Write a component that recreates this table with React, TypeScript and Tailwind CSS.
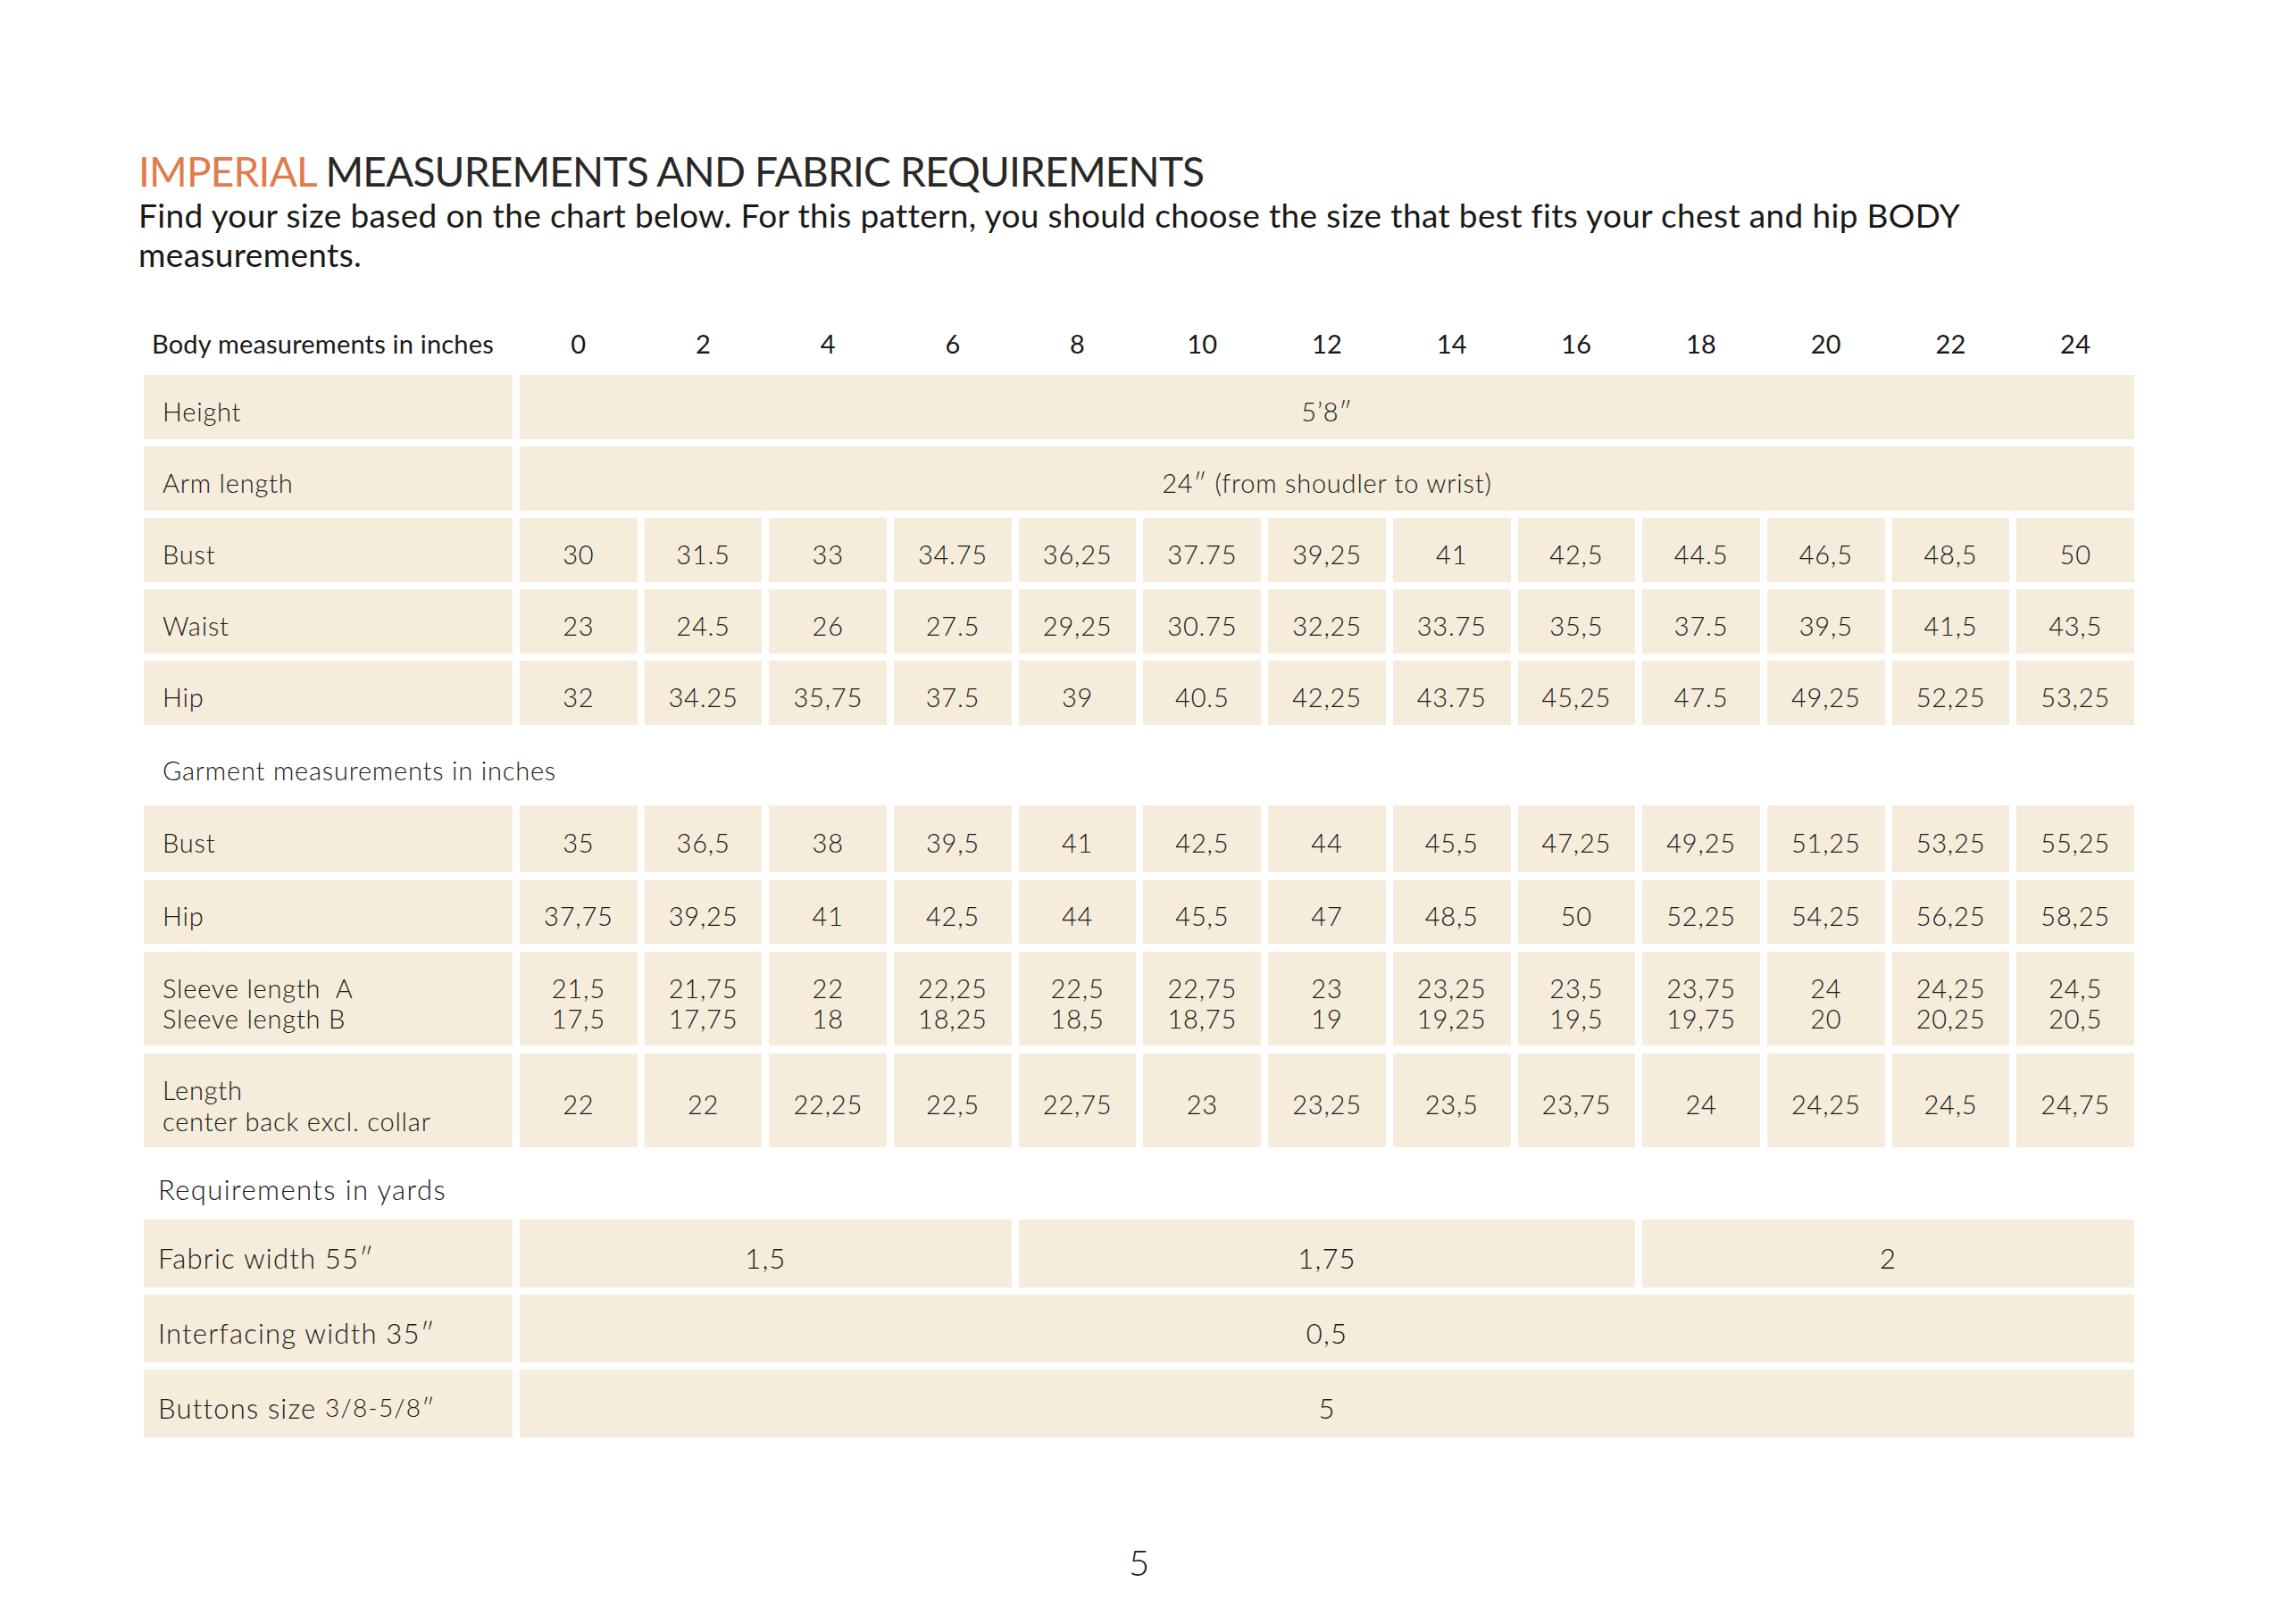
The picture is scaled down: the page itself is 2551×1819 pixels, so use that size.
import React from "react";

const sizes = ["0", "2", "4", "6", "8", "10", "12", "14", "16", "18", "20", "22", "24"];

const body: { label: string; values: string[] }[] = [
  { label: "Bust", values: ["30", "31.5", "33", "34.75", "36,25", "37.75", "39,25", "41", "42,5", "44.5", "46,5", "48,5", "50"] },
  { label: "Waist", values: ["23", "24.5", "26", "27.5", "29,25", "30.75", "32,25", "33.75", "35,5", "37.5", "39,5", "41,5", "43,5"] },
  { label: "Hip", values: ["32", "34.25", "35,75", "37.5", "39", "40.5", "42,25", "43.75", "45,25", "47.5", "49,25", "52,25", "53,25"] },
];

const sleeveA = ["21,5", "21,75", "22", "22,25", "22,5", "22,75", "23", "23,25", "23,5", "23,75", "24", "24,25", "24,5"];
const sleeveB = ["17,5", "17,75", "18", "18,25", "18,5", "18,75", "19", "19,25", "19,5", "19,75", "20", "20,25", "20,5"];

const garment: { label: string; values: string[] }[] = [
  { label: "Bust", values: ["35", "36,5", "38", "39,5", "41", "42,5", "44", "45,5", "47,25", "49,25", "51,25", "53,25", "55,25"] },
  { label: "Hip", values: ["37,75", "39,25", "41", "42,5", "44", "45,5", "47", "48,5", "50", "52,25", "54,25", "56,25", "58,25"] },
];

const lengths = ["22", "22", "22,25", "22,5", "22,75", "23", "23,25", "23,5", "23,75", "24", "24,25", "24,5", "24,75"];

const grid = "grid grid-cols-[413px_repeat(13,minmax(0,1fr))] gap-x-2";
const cell = "bg-[#f5ecdb] flex items-center pt-[10px]";

function Row({ label, values, h }: { label: string; values: string[]; h: string }) {
  return (
    <div className={`${grid} ${h}`}>
      <div className={`${cell} pl-[21px]`}>{label}</div>
      {values.map((v, i) => (
        <div key={i} className={`${cell} justify-center`}>
          {v}
        </div>
      ))}
    </div>
  );
}

function SpanRow({ label, value, h }: { label: string; value: string; h: string }) {
  return (
    <div className={`${grid} ${h}`}>
      <div className={`${cell} pl-[21px]`}>{label}</div>
      <div className={`${cell} col-span-13 justify-center`}>{value}</div>
    </div>
  );
}

export default function App() {
  return (
    <div
      className="min-h-[1819px] w-[2551px] bg-white text-[#1a1918]"
      style={{ fontFamily: "Lato, 'Noto Sans', sans-serif" }}
    >
      <div className="pl-[155px] pt-[164px]">
        <h1 className="text-[46px] leading-[1.2] font-normal tracking-[-0.8px] text-[#2a2826]">
          <span className="text-[#e07b4e]">IMPERIAL</span> MEASUREMENTS AND FABRIC REQUIREMENTS
        </h1>
        <p className="w-[2150px] text-[37px] leading-[44px] font-normal tracking-[0.35px]">
          Find your size based on the chart below. For this pattern, you should choose the size that best fits your chest and hip BODY measurements.
        </p>
      </div>

      <div className="ml-[161px] mt-[51px] w-[2229px] text-[29px] leading-[1.2] font-light tracking-[0.8px]">
        {/* body measurements */}
        <div className={`${grid} h-[54px] items-center font-normal tracking-[0.2px]`}>
          <div className="pl-[9px]">Body measurements in inches</div>
          {sizes.map((s) => (
            <div key={s} className="text-center">
              {s}
            </div>
          ))}
        </div>

        <div className="mt-2 flex flex-col gap-2">
          <SpanRow label="Height" value="5’8″" h="h-[72px]" />
          <SpanRow label="Arm length" value="24″ (from shoudler to wrist)" h="h-[72px]" />
          {body.map((r) => (
            <Row key={r.label} label={r.label} values={r.values} h="h-[72px]" />
          ))}
        </div>

        {/* garment measurements */}
        <div className="flex h-[90px] items-end pb-[21px] pl-[21px]">Garment measurements in inches</div>

        <div className="flex flex-col gap-[9px]">
          {garment.map((r, i) => (
            <Row key={r.label} label={r.label} values={r.values} h={i === 0 ? "h-[75px]" : "h-[71px]"} />
          ))}
          <div className={`${grid} h-[105px] leading-[34px]`}>
            <div className={`${cell} pl-[21px]`}>
              <div>
                <div>Sleeve length&nbsp; A</div>
                <div>Sleeve length B</div>
              </div>
            </div>
            {sleeveA.map((v, i) => (
              <div key={i} className={`${cell} justify-center text-center`}>
                <div>
                  <div>{v}</div>
                  <div>{sleeveB[i]}</div>
                </div>
              </div>
            ))}
          </div>
          <div className={`${grid} h-[105px]`}>
            <div className={`${cell} pl-[21px] leading-[35px]`}>
              <div>
                <div>Length</div>
                <div>center back excl. collar</div>
              </div>
            </div>
            {lengths.map((v, i) => (
              <div key={i} className={`${cell} justify-center`}>
                {v}
              </div>
            ))}
          </div>
        </div>

        {/* requirements */}
        <div className="flex h-[81px] items-end pb-[15px] pl-[16px] text-[31px] tracking-[1.4px]">Requirements in yards</div>

        <div className="flex flex-col gap-2 text-[31px] tracking-[1.2px]">
          <div className={`${grid} h-[76px]`}>
            <div className={`${cell} pl-[16px]`}>Fabric width 55″</div>
            <div className={`${cell} col-span-4 justify-center`}>1,5</div>
            <div className={`${cell} col-span-5 justify-center`}>1,75</div>
            <div className={`${cell} col-span-4 justify-center`}>2</div>
          </div>
          <div className={`${grid} h-[76px]`}>
            <div className={`${cell} pl-[16px]`}>Interfacing width 35″</div>
            <div className={`${cell} col-span-13 justify-center`}>0,5</div>
          </div>
          <div className={`${grid} h-[76px]`}>
            <div className={`${cell} pl-[16px]`}>
              Buttons size&nbsp;<span className="text-[28px]">3/8-5/8″</span>
            </div>
            <div className={`${cell} col-span-13 justify-center`}>5</div>
          </div>
        </div>
      </div>

      <div className="mt-[116px] text-center text-[40px] leading-[1.2] font-light">5</div>
    </div>
  );
}
